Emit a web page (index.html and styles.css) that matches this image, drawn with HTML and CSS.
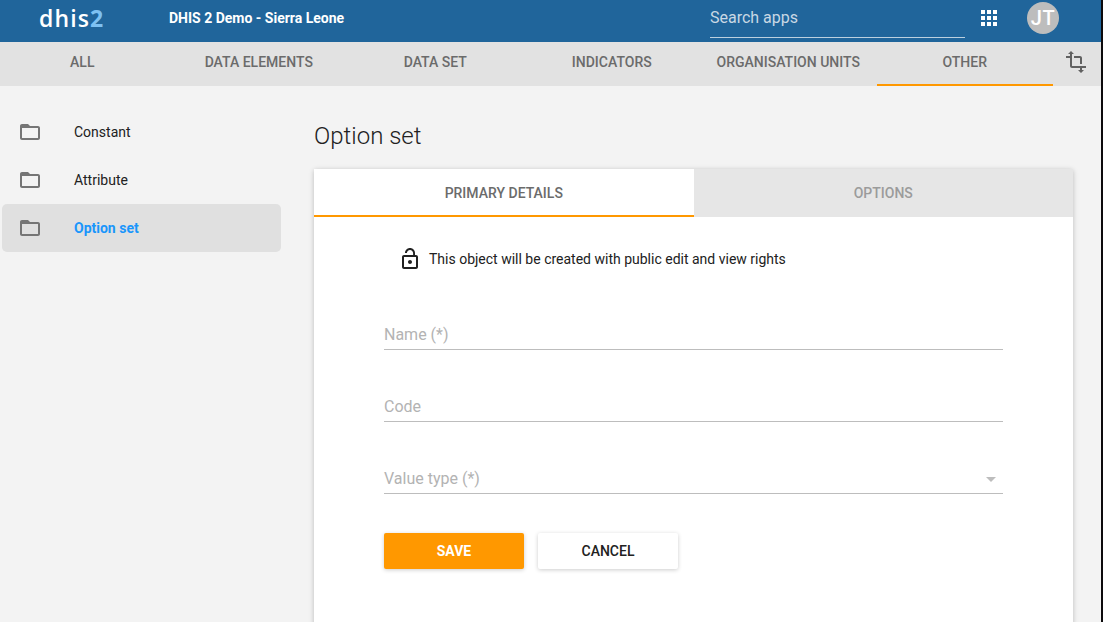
FILE: index.html
```html
<!DOCTYPE html>
<html lang="en">
<head>
  <meta charset="UTF-8" />
  <title>Maintenance - Option set</title>
  <link rel="stylesheet" href="styles.css">
</head>
<body>
  <div class="page">
    <header class="topbar">
      <div class="logo">dhis<span class="logo-two">2</span></div>
      <div class="instance">DHIS 2 Demo - Sierra Leone</div>
      <div class="search">Search apps</div>
      <svg class="apps" width="16" height="16" viewBox="0 0 16 16" fill="#fff">
        <rect x="0" y="0" width="4" height="4" /><rect x="6" y="0" width="4" height="4" /><rect x="12" y="0" width="4" height="4" />
        <rect x="0" y="6" width="4" height="4" /><rect x="6" y="6" width="4" height="4" /><rect x="12" y="6" width="4" height="4" />
        <rect x="0" y="12" width="4" height="4" /><rect x="6" y="12" width="4" height="4" /><rect x="12" y="12" width="4" height="4" />
      </svg>
      <div class="avatar">JT</div>
    </header>

    <nav class="sections">
      <a class="section">ALL</a>
      <a class="section">DATA ELEMENTS</a>
      <a class="section">DATA SET</a>
      <a class="section">INDICATORS</a>
      <a class="section">ORGANISATION UNITS</a>
      <a class="section active">OTHER</a>
      <svg class="crop" width="24" height="24" viewBox="0 0 24 24" fill="#616161">
        <path d="M22 18v-2H8V4h2L7 1 4 4h2v2H2v2h4v8c0 1.1.9 2 2 2h8v2h-2l3 3 3-3h-2v-2h4zM10 8h6v6h2V8c0-1.1-.9-2-2-2h-6v2z" />
      </svg>
    </nav>

    <div class="content">
      <aside class="sidebar">
        <a class="side-item">
          <svg class="folder" width="24" height="24" viewBox="0 0 24 24" fill="#757575"><path d="M20 6h-8l-2-2H4c-1.1 0-1.99.9-1.99 2L2 18c0 1.1.9 2 2 2h16c1.1 0 2-.9 2-2V8c0-1.1-.9-2-2-2zm0 12H4V8h16v10z" /></svg>
          Constant
        </a>
        <a class="side-item">
          <svg class="folder" width="24" height="24" viewBox="0 0 24 24" fill="#757575"><path d="M20 6h-8l-2-2H4c-1.1 0-1.99.9-1.99 2L2 18c0 1.1.9 2 2 2h16c1.1 0 2-.9 2-2V8c0-1.1-.9-2-2-2zm0 12H4V8h16v10z" /></svg>
          Attribute
        </a>
        <a class="side-item selected">
          <svg class="folder" width="24" height="24" viewBox="0 0 24 24" fill="#757575"><path d="M20 6h-8l-2-2H4c-1.1 0-1.99.9-1.99 2L2 18c0 1.1.9 2 2 2h16c1.1 0 2-.9 2-2V8c0-1.1-.9-2-2-2zm0 12H4V8h16v10z" /></svg>
          Option set
        </a>
      </aside>

      <main class="main">
        <h1 class="title">Option set</h1>
        <div class="card">
          <div class="tabs">
            <div class="tab active">PRIMARY DETAILS</div>
            <div class="tab">OPTIONS</div>
          </div>
          <div class="form">
            <div class="notice">
              <svg class="lock" width="24" height="24" viewBox="0 0 24 24" fill="#212121"><path d="M12 17c1.1 0 2-.9 2-2s-.9-2-2-2-2 .9-2 2 .9 2 2 2zm6-9h-1V6c0-2.76-2.24-5-5-5S7 3.24 7 6h1.9c0-1.71 1.39-3.1 3.1-3.1 1.71 0 3.1 1.39 3.1 3.1v2H6c-1.1 0-2 .9-2 2v10c0 1.1.9 2 2 2h12c1.1 0 2-.9 2-2V10c0-1.1-.9-2-2-2zm0 12H6V10h12v10z" /></svg>
              This object will be created with public edit and view rights
            </div>
            <div class="field">Name (*)</div>
            <div class="field">Code</div>
            <div class="field">Value type (*)<span class="arrow"></span></div>
            <div class="actions">
              <button class="btn save">SAVE</button>
              <button class="btn cancel">CANCEL</button>
            </div>
          </div>
        </div>
      </main>
    </div>
  </div>
</body>
</html>
```

FILE: styles.css
```css
html, body {
  margin: 0;
  height: 622px;
  overflow: hidden;
  background: #0c0a0c;
}
body {
  font-family: Roboto, Arial, sans-serif;
  font-size: 14px;
}
.page {
  width: 1101px;
  height: 622px;
  overflow: hidden;
  background: #f3f3f3;
}

/* Header bar */
.topbar {
  display: flex;
  align-items: center;
  height: 42px;
  background: #20659b;
  color: #fff;
}
.logo {
  width: 130px;
  margin-left: 39px;
  margin-top: -7px;
  font-family: "Open Sans", sans-serif;
  font-size: 23px;
  font-weight: 600;
  letter-spacing: 1.1px;
}
.logo-two {
  color: #7ec1f2;
  font-weight: 700;
}
.instance {
  width: 541px;
  margin-top: -6px;
  font-size: 14px;
  font-weight: 700;
}
.search {
  box-sizing: border-box;
  width: 255px;
  height: 34px;
  padding-top: 4px;
  font-size: 16px;
  color: #c9d8e4;
  border-bottom: 1px solid #bcd0df;
}
.apps {
  margin-left: 16px;
  margin-top: -6px;
}
.avatar {
  width: 32px;
  height: 32px;
  margin-left: 30px;
  margin-top: -7px;
  border-radius: 50%;
  background: #bdbdbd;
  font-size: 20px;
  font-weight: 500;
  line-height: 32px;
  text-align: center;
  letter-spacing: 0.5px;
}

/* Section tabs */
.sections {
  display: flex;
  height: 44px;
  margin-left: -6px;
  background: #e2e2e2;
}
.section {
  box-sizing: border-box;
  width: 176.5px;
  height: 44px;
  line-height: 40px;
  text-align: center;
  font-size: 14px;
  font-weight: 500;
  color: #6b6b6b;
}
.section.active {
  border-bottom: 2px solid #ff9800;
}
.crop {
  margin-left: 11px;
  margin-top: 8px;
}

.content {
  display: flex;
}

/* Left menu */
.sidebar {
  width: 279px;
  margin-left: 2px;
  padding-top: 22px;
}
.side-item {
  display: flex;
  align-items: center;
  height: 48px;
  padding-left: 16px;
  color: #212121;
  font-size: 14px;
  border-radius: 5px;
}
.side-item.selected {
  background: #e0e0e0;
  color: #1a96fb;
  font-weight: 700;
}
.folder {
  margin-right: 32px;
}

/* Main area */
.main {
  width: 759px;
  margin-left: 33px;
}
.title {
  margin: 35px 0 18px;
  font-size: 24px;
  font-weight: 300;
  line-height: 30px;
  color: #212121;
}
.card {
  height: 460px;
  background: #fff;
  border-radius: 2px;
  box-shadow: 0 1px 6px rgba(0, 0, 0, 0.12), 0 1px 4px rgba(0, 0, 0, 0.12);
}
.tabs {
  display: flex;
}
.tab {
  box-sizing: border-box;
  width: 379.5px;
  height: 48px;
  line-height: 49px;
  text-align: center;
  font-weight: 500;
  color: #9b9b9b;
  background: #e6e6e6;
}
.tab.active {
  color: #6b6b6b;
  background: #fff;
  border-bottom: 2px solid #ff9800;
}
.form {
  padding: 30px 70px 0;
}
.notice {
  display: flex;
  align-items: center;
  height: 24px;
  padding-left: 14px;
  color: #212121;
}
.lock {
  margin-right: 7px;
}
.field {
  position: relative;
  box-sizing: border-box;
  height: 37px;
  margin-top: 35px;
  padding-top: 12px;
  font-size: 16px;
  color: #b3b3b3;
  border-bottom: 1px solid #bdbdbd;
}
.notice + .field {
  margin-top: 42px;
}
.arrow {
  position: absolute;
  right: 7px;
  top: 20px;
  border-style: solid;
  border-width: 5px 5px 0;
  border-color: #bdbdbd transparent transparent;
}
.actions {
  display: flex;
  gap: 14px;
  margin-top: 39px;
}
.btn {
  width: 140px;
  height: 36px;
  padding: 0;
  border: none;
  border-radius: 2px;
  font-family: inherit;
  font-size: 14px;
  font-weight: 500;
  box-shadow: 0 1px 4px rgba(0, 0, 0, 0.2);
}
.save {
  background: #ff9800;
  color: #fff;
  font-weight: 700;
}
.cancel {
  background: #fff;
  color: #212121;
}
```
